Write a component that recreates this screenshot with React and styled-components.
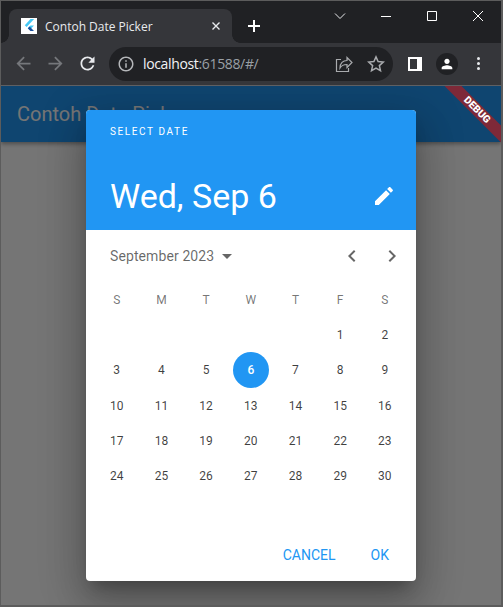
import React from 'react'
import styled, { createGlobalStyle } from 'styled-components'

const GlobalStyle = createGlobalStyle`
  html, body {
    margin: 0;
    height: 100%;
    background: #202124;
  }
  #root {
    height: 100%;
  }
  * {
    box-sizing: border-box;
  }
`

const Win = styled.div`
  height: 607px;
  display: flex;
  flex-direction: column;
  border: 1px solid #5c5c5c;
  border-width: 1px 2px 2px 1px;
  overflow: hidden;
  font-family: Roboto, sans-serif;
`

const TitleBar = styled.div`
  height: 42px;
  flex: none;
  display: flex;
  align-items: flex-end;
  padding-left: 8px;
  background: #202124;
`

const Tab = styled.div`
  position: relative;
  width: 223px;
  height: 34px;
  display: flex;
  align-items: center;
  padding: 0 11px 0 12px;
  background: #35363a;
  border-radius: 8px 8px 0 0;
  color: #e8eaed;
  font: 12px "Open Sans", sans-serif;

  &::before,
  &::after {
    content: '';
    position: absolute;
    bottom: 0;
    width: 8px;
    height: 8px;
  }
  &::before {
    left: -8px;
    background: radial-gradient(circle at 0 0, transparent 7.5px, #35363a 8px);
  }
  &::after {
    right: -8px;
    background: radial-gradient(circle at 100% 0, transparent 7.5px, #35363a 8px);
  }
`

const Favicon = styled.svg`
  width: 16px;
  height: 16px;
  margin-right: 8px;
  background: #fff;
`

const TabTitle = styled.span`
  flex: 1;
  white-space: nowrap;
`

const NewTab = styled.svg`
  width: 14px;
  height: 14px;
  margin: 0 0 10px 15px;
`

const WinControls = styled.div`
  margin-left: auto;
  height: 100%;
  display: flex;
  align-items: flex-start;
`

const WinButton = styled.div`
  width: 46px;
  height: 30px;
  display: flex;
  align-items: center;
  justify-content: center;
  svg {
    width: 12px;
    height: 12px;
  }
`

const ToolBar = styled.div`
  height: 43px;
  flex: none;
  display: flex;
  align-items: center;
  padding: 0 0 1px 12px;
  background: #35363a;
  border-bottom: 1px solid #5f6063;
`

const NavIcon = styled.svg`
  width: 21px;
  height: 21px;
  margin-right: 11px;
  fill: ${p => (p.$off ? '#75777b' : '#e8eaed')};
`

const Omnibox = styled.div`
  width: 284px;
  height: 34px;
  margin: 0 15px 0 0;
  padding: 0 8px 0 8px;
  display: flex;
  align-items: center;
  background: #202124;
  border-radius: 17px;
`

const InfoIcon = styled.svg`
  width: 18px;
  height: 18px;
  margin-right: 8px;
  fill: #b4b6b9;
`

const Url = styled.span`
  flex: 1;
  color: #9aa0a6;
  font: 14px "Open Sans", sans-serif;
  letter-spacing: -0.35px;
`

const Host = styled.span`
  color: #f1f3f4;
`

const OmniIcon = styled.svg`
  width: 18px;
  height: 18px;
  margin-left: 14px;
  fill: none;
  stroke: #a9abae;
  stroke-width: 1.2;
`

const PanelIcon = styled.div`
  width: 14px;
  height: 14px;
  margin: 0 14px 0 0;
  border: 2px solid #fff;
  border-right-width: 5px;
  background: #35363a;
`

const Avatar = styled.div`
  width: 22px;
  height: 22px;
  margin-right: 19px;
  border-radius: 50%;
  background: #202124;
  display: flex;
  align-items: center;
  justify-content: center;
  svg {
    width: 16px;
    height: 16px;
    fill: #fff;
  }
`

const Dots = styled.div`
  display: flex;
  flex-direction: column;
  gap: 2px;
  i {
    width: 3px;
    height: 3px;
    border-radius: 50%;
    background: #e8eaed;
  }
`

const Page = styled.div`
  position: relative;
  flex: 1;
  background: #fff;
  overflow: hidden;
`

const AppBar = styled.div`
  height: 56px;
  display: flex;
  align-items: center;
  padding-left: 16px;
  background: #2196f3;
  color: #fff;
  font-size: 20px;
  font-weight: 400;
  box-shadow: 0 2px 4px rgba(0, 0, 0, 0.35);
`

const DebugBanner = styled.div`
  position: absolute;
  top: 18px;
  right: -26px;
  width: 100px;
  height: 12px;
  background: rgba(183, 28, 28, 0.66);
  color: #fff;
  font: 900 10.2px/12px Roboto, sans-serif;
  text-align: center;
  transform: rotate(45deg);
`

const Scrim = styled.div`
  position: absolute;
  inset: 0;
  display: flex;
  align-items: center;
  justify-content: center;
  background: rgba(0, 0, 0, 0.54);
`

const Dialog = styled.div`
  width: 330px;
  height: 471px;
  margin-top: -1px;
  display: flex;
  flex-direction: column;
  background: #fff;
  border-radius: 4px;
  overflow: hidden;
  box-shadow: 0 11px 15px -7px rgba(0, 0, 0, 0.25), 0 24px 38px 3px rgba(0, 0, 0, 0.18),
    0 9px 46px 8px rgba(0, 0, 0, 0.14);
`

const Header = styled.div`
  height: 120px;
  flex: none;
  padding: 15px 20px 0 24px;
  display: flex;
  flex-direction: column;
  background: #2196f3;
  color: #fff;
`

const HelpText = styled.div`
  font-size: 10px;
  font-weight: 400;
  line-height: 14px;
  letter-spacing: 1.6px;
`

const HeadRow = styled.div`
  margin-top: 35px;
  display: flex;
  align-items: center;
  justify-content: space-between;
`

const BigDate = styled.div`
  font-size: 34px;
  line-height: 44px;
`

const EditIcon = styled.svg`
  width: 24px;
  height: 24px;
  fill: #fff;
`

const MonthRow = styled.div`
  height: 52px;
  flex: none;
  display: flex;
  align-items: center;
  padding: 0 12px 0 24px;
  color: rgba(0, 0, 0, 0.6);
  font-size: 14px;
  letter-spacing: 0.1px;
`

const Caret = styled.svg`
  width: 24px;
  height: 24px;
  margin: 0 auto 0 1px;
  fill: rgba(0, 0, 0, 0.6);
`

const Chevron = styled.svg`
  width: 24px;
  height: 24px;
  margin-left: 16px;
  fill: rgba(0, 0, 0, 0.6);
`

const Grid = styled.div`
  display: grid;
  grid-template-columns: repeat(7, 44.7px);
  grid-auto-rows: 35.2px;
  padding: 1px 0 0 8.4px;
`

const Cell = styled.div`
  display: flex;
  align-items: center;
  justify-content: center;
  font-size: 12px;
  color: ${p => (p.$head ? 'rgba(0, 0, 0, 0.55)' : 'rgba(0, 0, 0, 0.75)')};
`

const Selected = styled.span`
  width: 36px;
  height: 36px;
  display: flex;
  align-items: center;
  justify-content: center;
  border-radius: 50%;
  background: #2196f3;
  color: #fff;
  font-weight: 500;
`

const Footer = styled.div`
  margin-top: auto;
  height: 36px;
  display: flex;
  align-items: flex-start;
  justify-content: flex-end;
  gap: 35px;
  padding: 0 27px 0 0;
  color: #2196f3;
  font-size: 14px;
  font-weight: 400;
  line-height: 20px;
`

const days = ['S', 'M', 'T', 'W', 'T', 'F', 'S']
const blanks = [0, 1, 2, 3, 4]
const dates = Array.from({ length: 30 }, (_, i) => i + 1)

const App = () => (
  <>
    <GlobalStyle />
    <Win>
      <TitleBar>
        <Tab>
          <Favicon viewBox="0 0 16 16">
            <path d="M9.5 1h3.600L5.600 9 3.800 7.200z" fill="#44c8f5" />
            <path d="M9.400 7.600H13L8.600 12 6.800 10.200z" fill="#44c8f5" />
            <path d="M6.800 10.200l1.800-1.800 4.400 4.700H9.400z" fill="#1a4f9c" />
          </Favicon>
          <TabTitle>Contoh Date Picker</TabTitle>
          <svg width="10" height="10" viewBox="0 0 10 10" stroke="#e8eaed" strokeWidth="1.4">
            <path d="M1.500 1.500l7 7M8.500 1.500l-7 7" />
          </svg>
        </Tab>
        <NewTab viewBox="0 0 14 14" stroke="#fff" strokeWidth="2">
          <path d="M7 1v12M1 7h12" />
        </NewTab>
        <WinControls>
          <WinButton>
            <svg viewBox="0 0 12 12" fill="none" stroke="#e8eaed">
              <path d="M1 3.500l5 5 5-5" />
            </svg>
          </WinButton>
          <WinButton>
            <svg viewBox="0 0 12 12" stroke="#fff">
              <path d="M1 6.500h10" />
            </svg>
          </WinButton>
          <WinButton>
            <svg viewBox="0 0 12 12" fill="none" stroke="#fff">
              <path d="M1.500 1.500h9v9h-9z" />
            </svg>
          </WinButton>
          <WinButton>
            <svg viewBox="0 0 12 12" stroke="#fff">
              <path d="M1 1l10 10M11 1L1 11" />
            </svg>
          </WinButton>
        </WinControls>
      </TitleBar>
      <ToolBar>
        <NavIcon $off viewBox="0 0 24 24">
          <path d="M20 11H7.830l5.590-5.590L12 4l-8 8 8 8 1.410-1.410L7.830 13H20v-2z" />
        </NavIcon>
        <NavIcon $off viewBox="0 0 24 24">
          <path d="M12 4l-1.410 1.410L16.170 11H4v2h12.170l-5.580 5.590L12 20l8-8z" />
        </NavIcon>
        <NavIcon viewBox="0 0 24 24">
          <path d="M17.650 6.350C16.200 4.900 14.210 4 12 4c-4.420 0-7.990 3.580-7.990 8s3.570 8 7.990 8c3.730 0 6.840-2.550 7.730-6h-2.080c-.82 2.330-3.040 4-5.650 4-3.310 0-6-2.690-6-6s2.690-6 6-6c1.660 0 3.140.69 4.220 1.780L13 11h7V4l-2.350 2.350z" />
        </NavIcon>
        <Omnibox>
          <InfoIcon viewBox="0 0 24 24">
            <path d="M11 7h2v2h-2zm0 4h2v6h-2zm1-9C6.480 2 2 6.480 2 12s4.480 10 10 10 10-4.480 10-10S17.520 2 12 2zm0 18c-4.410 0-8-3.590-8-8s3.590-8 8-8 8 3.590 8 8-3.590 8-8 8z" />
          </InfoIcon>
          <Url>
            <Host>localhost</Host>:61588/#/
          </Url>
          <OmniIcon viewBox="0 0 18 18">
            <path d="M6 4.500H1.500v12h12V13M5 13c0-5 3-7.500 7-7.500V2.500l5 5-5 5V9.500c-3 0-5.500 .8-7 3.500z" />
          </OmniIcon>
          <OmniIcon viewBox="0 0 24 24">
            <path d="M12 2.500l2.800 6.300 6.900.7-5.200 4.600 1.500 6.800L12 17.400l-6 3.500 1.500-6.800-5.200-4.600 6.900-.7z" strokeWidth="2" />
          </OmniIcon>
        </Omnibox>
        <PanelIcon />
        <Avatar>
          <svg viewBox="0 0 24 24">
            <path d="M12 12c2.210 0 4-1.790 4-4s-1.790-4-4-4-4 1.790-4 4 1.790 4 4 4zm0 2c-2.670 0-8 1.340-8 4v2h16v-2c0-2.660-5.330-4-8-4z" />
          </svg>
        </Avatar>
        <Dots>
          <i />
          <i />
          <i />
        </Dots>
      </ToolBar>
      <Page>
        <AppBar>Contoh Date Picker</AppBar>
        <Scrim>
          <Dialog>
            <Header>
              <HelpText>SELECT DATE</HelpText>
              <HeadRow>
                <BigDate>Wed, Sep 6</BigDate>
                <EditIcon viewBox="0 0 24 24">
                  <path d="M3 17.250V21h3.750L17.810 9.940l-3.750-3.750L3 17.250zM20.710 7.040c.39-.39.39-1.020 0-1.410l-2.340-2.340c-.39-.39-1.020-.39-1.410 0l-1.830 1.830 3.750 3.750 1.830-1.830z" />
                </EditIcon>
              </HeadRow>
            </Header>
            <MonthRow>
              September 2023
              <Caret viewBox="0 0 24 24">
                <path d="M7 10l5 5 5-5z" />
              </Caret>
              <Chevron viewBox="0 0 24 24">
                <path d="M15.410 7.410L14 6l-6 6 6 6 1.410-1.410L10.830 12z" />
              </Chevron>
              <Chevron viewBox="0 0 24 24">
                <path d="M10 6L8.590 7.410 13.170 12l-4.580 4.590L10 18l6-6z" />
              </Chevron>
            </MonthRow>
            <Grid>
              {days.map((d, i) => (
                <Cell $head key={i}>
                  {d}
                </Cell>
              ))}
              {blanks.map(b => (
                <Cell key={'b' + b} />
              ))}
              {dates.map(d => (
                <Cell key={d}>{d === 6 ? <Selected>6</Selected> : d}</Cell>
              ))}
            </Grid>
            <Footer>
              <span>CANCEL</span>
              <span>OK</span>
            </Footer>
          </Dialog>
        </Scrim>
        <DebugBanner>DEBUG</DebugBanner>
      </Page>
    </Win>
  </>
)

export default App
